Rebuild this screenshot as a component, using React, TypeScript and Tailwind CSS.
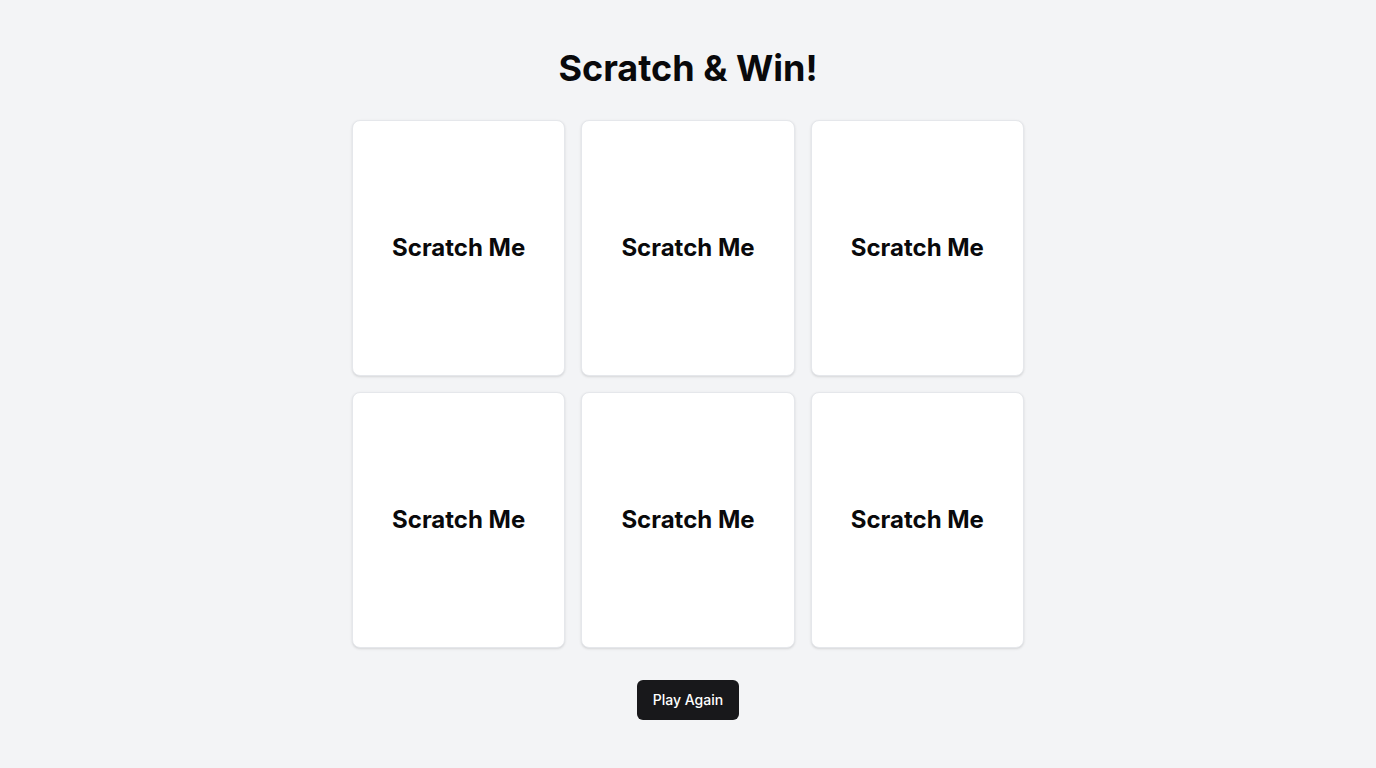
import { useState } from 'react'

export default function App() {
  const [cards] = useState(Array.from({ length: 6 }, (_, i) => i))

  return (
    <div className="min-h-screen bg-gray-100 flex flex-col items-center py-12 font-['Inter',sans-serif] text-[#09090b]">
      <h1 className="text-4xl font-bold mb-8">Scratch &amp; Win!</h1>

      {/* Cards */}
      <div className="grid grid-cols-3 gap-4 w-[672px]">
        {cards.map(i => (
          <div
            key={i}
            className="h-64 bg-white border border-gray-200 rounded-lg shadow-sm flex items-center justify-center"
          >
            <span className="text-2xl font-bold">Scratch Me</span>
          </div>
        ))}
      </div>

      <button className="mt-8 h-10 px-4 bg-[#18181b] text-white text-sm font-medium rounded-md">
        Play Again
      </button>
    </div>
  )
}
